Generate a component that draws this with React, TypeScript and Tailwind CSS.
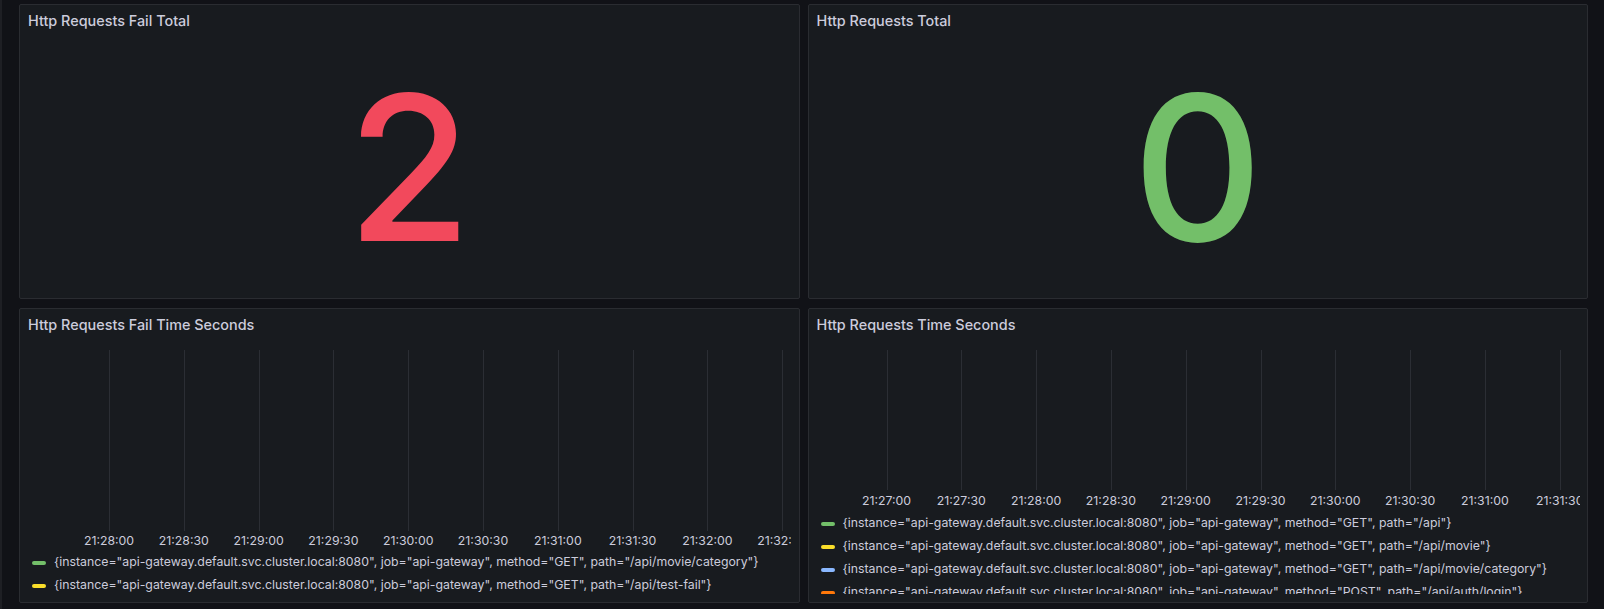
import { FC } from "react";

type Series = { color: string; label: string };

const STEP = 74.8;

const failSeries: Series[] = [
  {
    color: "bg-[#73bf69]",
    label:
      '{instance="api-gateway.default.svc.cluster.local:8080", job="api-gateway", method="GET", path="/api/movie/category"}',
  },
  {
    color: "bg-[#fade2a]",
    label:
      '{instance="api-gateway.default.svc.cluster.local:8080", job="api-gateway", method="GET", path="/api/test-fail"}',
  },
];

const timeSeries: Series[] = [
  {
    color: "bg-[#73bf69]",
    label:
      '{instance="api-gateway.default.svc.cluster.local:8080", job="api-gateway", method="GET", path="/api"}',
  },
  {
    color: "bg-[#fade2a]",
    label:
      '{instance="api-gateway.default.svc.cluster.local:8080", job="api-gateway", method="GET", path="/api/movie"}',
  },
  {
    color: "bg-[#8ab8ff]",
    label:
      '{instance="api-gateway.default.svc.cluster.local:8080", job="api-gateway", method="GET", path="/api/movie/category"}',
  },
  {
    color: "bg-[#ff780a]",
    label:
      '{instance="api-gateway.default.svc.cluster.local:8080", job="api-gateway", method="POST", path="/api/auth/login"}',
  },
];

const Panel: FC<{ title: string; children: React.ReactNode }> = ({
  title,
  children,
}) => (
  <section className="flex flex-col h-[295px] bg-[#181b1f] border border-[#2a2c31] rounded-[2px] overflow-hidden">
    <div className="h-8 shrink-0 flex items-center px-2 text-[14.4px] font-medium text-[#ccccdc]">
      {title}
    </div>
    {children}
  </section>
);

const Stat: FC<{ value: string; color: string }> = ({ value, color }) => (
  <div className="flex-1 flex items-center justify-center">
    <span className={`text-[202px] leading-none font-medium ${color}`}>
      {value}
    </span>
  </div>
);

const TimeSeries: FC<{
  ticks: string[];
  start: number;
  plotHeight: number;
  axisHeight: number;
  legendHeight: number;
  series: Series[];
}> = ({ ticks, start, plotHeight, axisHeight, legendHeight, series }) => (
  <div className="flex flex-col pt-[9px]">
    <div className="relative w-[771px] overflow-hidden" style={{ height: plotHeight + axisHeight }}>
      {ticks.map((t, i) => (
        <div key={t}>
          <div
            className="absolute top-0 w-px bg-[#2b2e34]"
            style={{ left: start + i * STEP, height: plotHeight }}
          />
          <div
            className="absolute flex items-center justify-center w-[80px] text-[12.3px] text-[#ccccdc] whitespace-nowrap"
            style={{
              left: start + i * STEP - 40,
              top: plotHeight,
              height: axisHeight,
            }}
          >
            {t}
          </div>
        </div>
      ))}
    </div>
    <div className="overflow-hidden" style={{ height: legendHeight }}>
      {series.map((s, i) => (
        <div key={i} className="h-[23px] flex items-center pl-3">
          <span className={`w-[14px] h-1 rounded-full shrink-0 ${s.color}`} />
          <span className="ml-2 text-[12.3px] text-[#ccccdc] whitespace-nowrap">
            {s.label}
          </span>
        </div>
      ))}
    </div>
  </div>
);

const App: FC = () => {
  return (
    <main
      className="flex w-[1604px] h-[609px] bg-[#111217] overflow-hidden"
      style={{ fontFamily: "Inter, 'Liberation Sans', sans-serif" }}
    >
      <div className="w-[2px] h-full bg-[#1e1f24] shrink-0" />
      <div className="flex-1 pl-[17px] pr-4 pt-1">
        <div className="grid grid-cols-2 gap-x-2 gap-y-[9px]">
          <Panel title="Http Requests Fail Total">
            <Stat value="2" color="text-[#f2495c]" />
          </Panel>
          <Panel title="Http Requests Total">
            <Stat value="0" color="text-[#73bf69]" />
          </Panel>
          <Panel title="Http Requests Fail Time Seconds">
            <TimeSeries
              ticks={[
                "21:28:00",
                "21:28:30",
                "21:29:00",
                "21:29:30",
                "21:30:00",
                "21:30:30",
                "21:31:00",
                "21:31:30",
                "21:32:00",
                "21:32:30",
              ]}
              start={89}
              plotHeight={181}
              axisHeight={20}
              legendHeight={46}
              series={failSeries}
            />
          </Panel>
          <Panel title="Http Requests Time Seconds">
            <TimeSeries
              ticks={[
                "21:27:00",
                "21:27:30",
                "21:28:00",
                "21:28:30",
                "21:29:00",
                "21:29:30",
                "21:30:00",
                "21:30:30",
                "21:31:00",
                "21:31:30",
              ]}
              start={78}
              plotHeight={140}
              axisHeight={22}
              legendHeight={82}
              series={timeSeries}
            />
          </Panel>
        </div>
      </div>
    </main>
  );
};

export default App;
